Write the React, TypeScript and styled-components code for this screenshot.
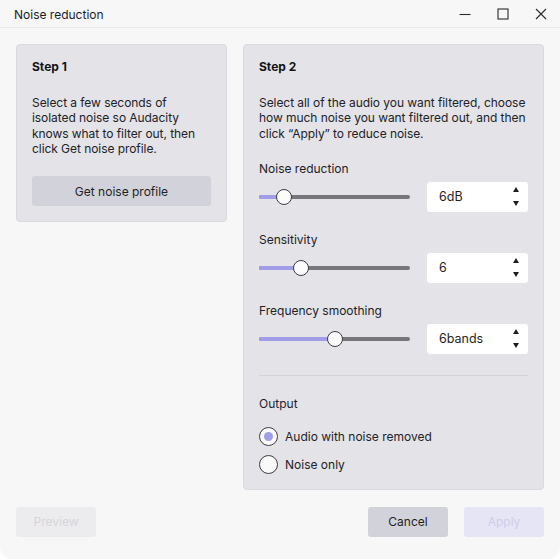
import styled, { createGlobalStyle } from "styled-components";

const GlobalStyle = createGlobalStyle`
  html, body {
    margin: 0;
    padding: 0;
    background: #ffffff;
  }
  body {
    font-family: Inter, "Noto Sans", "Liberation Sans", sans-serif;
    font-size: 12px;
    color: #1f1f23;
  }
`;

const Window = styled.div`
  width: 560px;
  height: 559px;
  background: #f7f7f8;
  border-radius: 0 0 12px 12px;
  display: flex;
  flex-direction: column;
  box-sizing: border-box;
  overflow: hidden;
`;

const TitleBar = styled.div`
  height: 28px;
  box-sizing: border-box;
  border-bottom: 1px solid #ebebed;
  display: flex;
  align-items: center;
  padding-left: 14px;
  font-size: 12px;
  color: #1c1c1e;
`;

const Title = styled.div`
  flex: 1;
  padding-top: 1px;
`;

const Controls = styled.div`
  display: flex;
  align-items: center;
  height: 100%;
`;

const ControlButton = styled.div`
  width: 38px;
  height: 100%;
  display: flex;
  align-items: center;
  justify-content: center;
`;

const Content = styled.div`
  display: flex;
  align-items: flex-start;
  gap: 16px;
  padding: 16px 16px 0 16px;
`;

const Panel = styled.section<{ $width: number }>`
  width: ${(p) => p.$width}px;
  box-sizing: border-box;
  background: #e3e3e8;
  border: 1px solid #d9d9df;
  border-radius: 4px;
  padding: 14px 15px 15px 15px;
  display: flex;
  flex-direction: column;
`;

const Heading = styled.h2`
  margin: 0;
  font-size: 12px;
  font-weight: 700;
  line-height: 16px;
  color: #141416;
`;

const Paragraph = styled.p`
  margin: 20px 0 0 0;
  font-size: 12px;
  line-height: 15.3px;
  letter-spacing: -0.06px;
  color: #222226;
`;

const ProfileButton = styled.button`
  margin-top: 20px;
  height: 30px;
  border: none;
  border-radius: 3px;
  background: #d2d2da;
  font-family: inherit;
  font-size: 12px;
  color: #1f1f23;
`;

const FieldLabel = styled.div`
  margin-top: 20px;
  line-height: 16px;
  font-size: 12px;
  color: #222226;
`;

const SliderRow = styled.div`
  display: flex;
  align-items: center;
  gap: 17px;
  margin-top: 5px;
`;

const Track = styled.div`
  position: relative;
  width: 151px;
  height: 4px;
  border-radius: 2px;
  background: #77777b;
`;

const TrackFill = styled.div`
  position: absolute;
  left: 0;
  top: 0;
  bottom: 0;
  border-radius: 2px;
  background: #a19de6;
`;

const Thumb = styled.div`
  position: absolute;
  top: 50%;
  width: 14px;
  height: 14px;
  margin: -8px 0 0 -8px;
  border-radius: 50%;
  background: #fcfcfd;
  border: 1px solid #3d3d42;
`;

const SpinBox = styled.div`
  width: 101px;
  height: 30px;
  box-sizing: border-box;
  background: #ffffff;
  border-radius: 3px;
  display: flex;
  align-items: center;
  padding: 0 9px 0 12px;
  font-size: 12.5px;
  color: #1f1f23;
`;

const SpinValue = styled.span`
  flex: 1;
`;

const Arrows = styled.div`
  display: flex;
  flex-direction: column;
  gap: 9px;
  align-items: center;
`;

const Divider = styled.hr`
  margin: 21px 0 0 0;
  border: none;
  border-top: 1px solid #d3d3d9;
  height: 0;
`;

const RadioGroup = styled.div`
  display: flex;
  flex-direction: column;
  gap: 10px;
  margin-top: 16px;
`;

const RadioRow = styled.label`
  display: flex;
  align-items: center;
  gap: 7px;
  height: 18px;
  font-size: 12px;
  color: #222226;
`;

const RadioCircle = styled.span<{ $checked?: boolean }>`
  width: 19px;
  height: 19px;
  box-sizing: border-box;
  border-radius: 50%;
  border: 1px solid #3d3d42;
  background: #f9f9fa;
  display: flex;
  align-items: center;
  justify-content: center;
  &::after {
    content: "";
    width: 9px;
    height: 9px;
    border-radius: 50%;
    background: ${(p) => (p.$checked ? "#a19de6" : "transparent")};
  }
`;

const Footer = styled.div`
  display: flex;
  align-items: center;
  gap: 16px;
  padding: 17px 16px 0 16px;
`;

const Spacer = styled.div`
  flex: 1;
`;

const FooterButton = styled.button<{ $variant: "disabled" | "secondary" | "primaryDisabled" }>`
  width: 80px;
  height: 30px;
  border: none;
  border-radius: 3px;
  font-family: inherit;
  font-size: 12px;
  background: ${(p) =>
    p.$variant === "secondary" ? "#d2d2da" : p.$variant === "primaryDisabled" ? "#e6e5f6" : "#ececef"};
  color: ${(p) =>
    p.$variant === "secondary" ? "#1f1f23" : p.$variant === "primaryDisabled" ? "#cfcde8" : "#d5d5d9"};
`;

function Slider({ value }: { value: number }) {
  return (
    <Track>
      <TrackFill style={{ width: `${value}%` }} />
      <Thumb style={{ left: `${value}%` }} />
    </Track>
  );
}

function Spin({ value }: { value: string }) {
  return (
    <SpinBox>
      <SpinValue>{value}</SpinValue>
      <Arrows>
        <svg width="6" height="5" viewBox="0 0 6 5">
          <path d="M3 0 L6 5 L0 5 Z" fill="#1f1f23" />
        </svg>
        <svg width="6" height="5" viewBox="0 0 6 5">
          <path d="M0 0 L6 0 L3 5 Z" fill="#1f1f23" />
        </svg>
      </Arrows>
    </SpinBox>
  );
}

const controls = [
  { label: "Noise reduction", value: "6dB", pos: 16.5 },
  { label: "Sensitivity", value: "6", pos: 27.5 },
  { label: "Frequency smoothing", value: "6bands", pos: 50.5 },
];

export default function App() {
  return (
    <>
      <GlobalStyle />
      <Window>
        <TitleBar>
          <Title>Noise reduction</Title>
          <Controls>
            <ControlButton>
              <svg width="12" height="12" viewBox="0 0 12 12">
                <path d="M0.5 6.5 H11.5" stroke="#2a2a2e" strokeWidth="1.1" />
              </svg>
            </ControlButton>
            <ControlButton>
              <svg width="12" height="12" viewBox="0 0 12 12">
                <rect x="1" y="1" width="10" height="10" fill="none" stroke="#2a2a2e" strokeWidth="1.1" />
              </svg>
            </ControlButton>
            <ControlButton>
              <svg width="12" height="12" viewBox="0 0 12 12">
                <path d="M1 1 L11 11 M11 1 L1 11" stroke="#2a2a2e" strokeWidth="1.1" />
              </svg>
            </ControlButton>
          </Controls>
        </TitleBar>
        <Content>
          <Panel $width={211}>
            <Heading>Step 1</Heading>
            <Paragraph>
              Select a few seconds of isolated noise so Audacity knows what to filter out, then click Get noise
              profile.
            </Paragraph>
            <ProfileButton>Get noise profile</ProfileButton>
          </Panel>
          <Panel $width={301}>
            <Heading>Step 2</Heading>
            <Paragraph>
              Select all of the audio you want filtered, choose how much noise you want filtered out, and then
              click “Apply” to reduce noise.
            </Paragraph>
            {controls.map((c) => (
              <div key={c.label}>
                <FieldLabel>{c.label}</FieldLabel>
                <SliderRow>
                  <Slider value={c.pos} />
                  <Spin value={c.value} />
                </SliderRow>
              </div>
            ))}
            <Divider />
            <FieldLabel>Output</FieldLabel>
            <RadioGroup>
              <RadioRow>
                <RadioCircle $checked />
                Audio with noise removed
              </RadioRow>
              <RadioRow>
                <RadioCircle />
                Noise only
              </RadioRow>
            </RadioGroup>
          </Panel>
        </Content>
        <Footer>
          <FooterButton $variant="disabled">Preview</FooterButton>
          <Spacer />
          <FooterButton $variant="secondary">Cancel</FooterButton>
          <FooterButton $variant="primaryDisabled">Apply</FooterButton>
        </Footer>
      </Window>
    </>
  );
}
